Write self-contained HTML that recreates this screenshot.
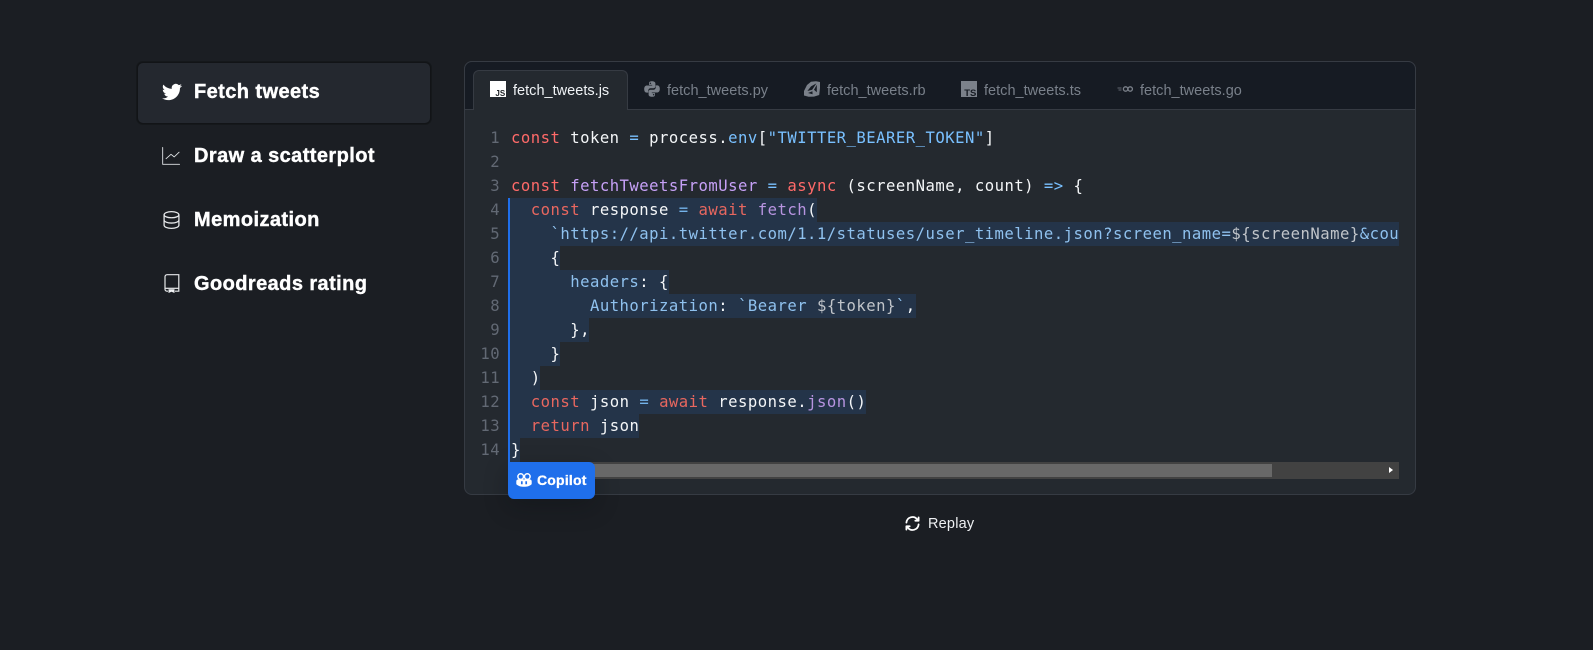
<!DOCTYPE html>
<html><head><meta charset="utf-8">
<style>
html,body{margin:0;padding:0;width:1593px;height:650px;overflow:hidden;background:#1b1e23;}
*{box-sizing:border-box}
body{position:relative;font-family:"Liberation Sans",sans-serif;}
.abs{position:absolute}
.nav{position:absolute;left:194px;font-weight:700;font-size:20px;letter-spacing:.42px;color:#fff;line-height:24px;white-space:nowrap;-webkit-text-stroke:.4px #fff}
.ic{position:absolute}
.active{position:absolute;left:137px;top:62px;width:294px;height:62px;background:#24282f;border:1px solid #121417;box-shadow:0 0 0 1px #15181b;border-radius:6px}
.panel{position:absolute;left:464px;top:61px;width:952px;height:434px;background:#24292f;border:1px solid #363b43;border-radius:8px;overflow:hidden}
.strip{position:absolute;left:464px;top:61px;width:952px;height:49px;background:#161b23;border:1px solid #363b43;border-radius:8px 8px 0 0}
.tab{position:absolute;left:473px;top:70px;width:155px;height:40px;background:#24292f;border:1px solid #363b43;border-bottom:0;border-radius:6px 6px 0 0}
.tt{position:absolute;top:81px;font-size:14.5px;line-height:20px;letter-spacing:.02px;color:#79808a;white-space:nowrap}
.row{position:absolute;left:510px;height:24px;background:#243449}
.n{position:absolute;left:470px;width:30px;text-align:right;font:15.6px/24px "DejaVu Sans Mono",monospace;color:#626974;letter-spacing:.4px}
.l{position:absolute;left:511px;width:888px;overflow:hidden;font:15.6px/24px "DejaVu Sans Mono",monospace;letter-spacing:.48px;color:#f4f6f8;white-space:pre}
.k{color:#ff6a69}.b{color:#79c0ff}.p{color:#c6a0f6}
.d .k{color:#e8675f}.d .b{color:#74b3ea}.d .p{color:#b794e0}.d .s{color:#8fc1ee}.d .g{color:#c0c4c9}
</style></head><body>

<div class="active"></div>
<svg class="ic" style="left:162px;top:82px" width="20" height="20" viewBox="0 0 24 24" fill="#fff"><path d="M23.95 4.57a10 10 0 0 1-2.82.77 4.96 4.96 0 0 0 2.16-2.72 9.9 9.9 0 0 1-3.12 1.18 4.92 4.92 0 0 0-8.38 4.48A13.98 13.98 0 0 1 1.64 3.16a4.92 4.92 0 0 0 1.52 6.57 4.9 4.9 0 0 1-2.23-.62v.06a4.92 4.92 0 0 0 3.95 4.83 5 5 0 0 1-2.21.08 4.94 4.94 0 0 0 4.6 3.42A9.87 9.87 0 0 1 0 19.54a14 14 0 0 0 7.56 2.21c9.05 0 14-7.5 14-13.98 0-.21 0-.42-.02-.63a9.94 9.94 0 0 0 2.46-2.55z"/></svg>
<div class="nav" style="top:80px">Fetch tweets</div>

<svg class="ic" style="left:162px;top:147px" width="18" height="18" viewBox="0 0 16 16" fill="none" stroke="#dfe2e5" stroke-width=".8"><path d="M.6.4v15h15" stroke-linecap="round" stroke-linejoin="round"/><path d="M15.200 4.600l-4.400 4.200-2.800-2.300-4.400 3.900" stroke-linecap="round" stroke-linejoin="round"/></svg>
<div class="nav" style="top:144px">Draw a scatterplot</div>

<svg class="ic" style="left:163px;top:211px" width="17" height="18" viewBox="0 0 16 17" fill="none" stroke="#e6e8ea" stroke-width="1.200"><ellipse cx="8" cy="3.500" rx="7" ry="2.900"/><path d="M1 3.500v10c0 1.600 3.100 2.900 7 2.900s7-1.300 7-2.900v-10M1 8.500c0 1.600 3.100 2.900 7 2.900s7-1.300 7-2.900"/></svg>
<div class="nav" style="top:208px">Memoization</div>

<svg class="ic" style="left:164px;top:274px" width="16" height="19" viewBox="0 0 16 19" fill="none" stroke="#e6e8ea" stroke-width="1.200"><path d="M4 17.200H3A2 2 0 0 1 1 15.200V2.700A2 2 0 0 1 3 .7h11.800v16.500H11"/><path d="M1 14.300h13.800"/><path d="M4.500 15.200h6V19L7.500 17.700 4.500 19z" fill="#f0f2f4" stroke="none"/></svg>
<div class="nav" style="top:272px">Goodreads rating</div>

<div class="panel"></div>
<div class="strip"></div>
<div class="tab"></div>

<!-- JS -->
<svg class="ic" style="left:490px;top:81px" width="16" height="16" viewBox="0 0 16 16"><rect width="16" height="16" fill="#fff"/><text x="15.200" y="15" text-anchor="end" font-family="Liberation Sans" font-weight="700" font-size="8" fill="#1b1f23">JS</text></svg>
<div class="tt" style="left:513px;color:#f0f3f6">fetch_tweets.js</div>

<!-- Python -->
<svg class="ic" style="left:644px;top:81px" width="16" height="16" viewBox="0 0 16 16" fill="#7b818a"><path d="M8 .2C5.200.2 5 1.400 5 2.400v1.500h3.200v.6H3C1.400 4.500.2 5.600.2 8s1 3.600 2.500 3.600h1.600V9.500c0-1.300 1.100-2.300 2.300-2.300h3c1.100 0 1.800-.9 1.800-1.900V2.400C11.400 1 10 .2 8 .2z"/><path d="M8 15.800c2.800 0 3-1.200 3-2.200v-1.500H7.800v-.6H13c1.600 0 2.800-1.100 2.800-3.500s-1-3.600-2.500-3.600h-1.600v2.100c0 1.300-1.100 2.300-2.300 2.300h-3c-1.100 0-1.800.9-1.800 1.900v2.900C4.600 15 6 15.800 8 15.800z"/><circle cx="6.400" cy="2.300" r=".7" fill="#161b23"/><circle cx="9.600" cy="13.700" r=".7" fill="#161b23"/></svg>
<div class="tt" style="left:667px">fetch_tweets.py</div>

<!-- Ruby -->
<svg class="ic" style="left:804px;top:81px" width="16" height="16" viewBox="0 0 16 16"><path d="M7 .8L12 .2 16 1v6l-.8 7-5.200 1.600-5.400.2L0 14.500 0 10 3 4z" fill="#7b818a"/><path d="M12.400 2.400L7 5.400 3.400 10l4.800-1.200zM8.400 10.200l-4.400 1.800 4.600 1.200zM12.800 3.800l-2.800 5 2.800 2.400z" fill="#161b23"/></svg>
<div class="tt" style="left:827px">fetch_tweets.rb</div>

<!-- TS -->
<svg class="ic" style="left:961px;top:81px" width="16" height="16" viewBox="0 0 16 16"><rect width="16" height="16" fill="#7b818a"/><text x="15.400" y="14.800" text-anchor="end" font-family="Liberation Sans" font-weight="700" font-size="9.500" fill="#161b23">TS</text></svg>
<div class="tt" style="left:984px">fetch_tweets.ts</div>

<!-- Go -->
<svg class="ic" style="left:1117px;top:81px" width="16" height="16" viewBox="0 0 16 16" fill="none" stroke="#7b818a" stroke-width="1.300"><circle cx="8.600" cy="8" r="2.200"/><circle cx="13.200" cy="8" r="2.200"/><path d="M.5 7h4M1.500 9h3" stroke-width=".8"/></svg>
<div class="tt" style="left:1140px">fetch_tweets.go</div>

<!-- badge shadow, below code and scrollbar -->
<div class="abs" style="left:508px;top:462px;width:87px;height:37px;border-radius:0 6px 6px 6px;box-shadow:0 8px 24px rgba(10,12,16,.3)"></div>

<!-- highlight rows -->
<div class="row" style="top:198px;width:307px"></div>
<div class="row" style="top:222px;width:889px"></div>
<div class="row" style="top:246px;width:50px"></div>
<div class="row" style="top:270px;width:159px"></div>
<div class="row" style="top:294px;width:406px"></div>
<div class="row" style="top:318px;width:79px"></div>
<div class="row" style="top:342px;width:50px"></div>
<div class="row" style="top:366px;width:30px"></div>
<div class="row" style="top:390px;width:356px"></div>
<div class="row" style="top:414px;width:129px"></div>
<div class="row" style="top:438px;width:10px"></div>
<div class="abs" style="left:508px;top:198px;width:2px;height:266px;background:#1f6feb"></div>

<div class="n" style="top:126px">1</div>
<div class="n" style="top:150px">2</div>
<div class="n" style="top:174px">3</div>
<div class="n" style="top:198px">4</div>
<div class="n" style="top:222px">5</div>
<div class="n" style="top:246px">6</div>
<div class="n" style="top:270px">7</div>
<div class="n" style="top:294px">8</div>
<div class="n" style="top:318px">9</div>
<div class="n" style="top:342px">10</div>
<div class="n" style="top:366px">11</div>
<div class="n" style="top:390px">12</div>
<div class="n" style="top:414px">13</div>
<div class="n" style="top:438px">14</div>

<div class="l" style="top:126px"><span class="k">const</span> token <span class="b">=</span> process.<span class="b">env</span>[<span class="b">"TWITTER_BEARER_TOKEN"</span>]</div>
<div class="l" style="top:174px"><span class="k">const</span> <span class="p">fetchTweetsFromUser</span> <span class="b">=</span> <span class="k">async</span> (screenName, count) <span class="b">=&gt;</span> {</div>
<div class="l d" style="top:198px">  <span class="k">const</span> response <span class="b">=</span> <span class="k">await</span> <span class="p">fetch</span>(</div>
<div class="l d" style="top:222px">    <span class="s">`https://api.twitter.com/1.1/statuses/user_timeline.json?screen_name=</span><span class="g">${screenName}</span><span class="s">&amp;count=${count}`</span>,</div>
<div class="l d" style="top:246px">    {</div>
<div class="l d" style="top:270px">      <span class="s">headers</span>: {</div>
<div class="l d" style="top:294px">        <span class="s">Authorization</span>: <span class="s">`Bearer </span><span class="g">${token}</span><span class="s">`</span>,</div>
<div class="l d" style="top:318px">      },</div>
<div class="l d" style="top:342px">    }</div>
<div class="l d" style="top:366px">  )</div>
<div class="l d" style="top:390px">  <span class="k">const</span> json <span class="b">=</span> <span class="k">await</span> response.<span class="p">json</span>()</div>
<div class="l d" style="top:414px">  <span class="k">return</span> json</div>
<div class="l d" style="top:438px">}</div>

<!-- scrollbar -->
<div class="abs" style="left:510px;top:462px;width:889px;height:17px;background:#424242"></div>
<div class="abs" style="left:560px;top:464px;width:712px;height:13px;background:#686868"></div>
<div class="abs" style="left:1389px;top:467px;width:0;height:0;border-left:4px solid #fff;border-top:3.500px solid transparent;border-bottom:3.500px solid transparent"></div>

<!-- copilot badge -->
<div class="abs" style="left:508px;top:462px;width:87px;height:37px;background:#1f6feb;border-radius:0 6px 6px 6px"></div>
<svg class="ic" style="left:516px;top:473px" width="16" height="14" viewBox="0 0 16 14"><circle cx="4.700" cy="3.600" r="2.800" fill="none" stroke="#fff" stroke-width="1.500"/><circle cx="11.300" cy="3.600" r="2.800" fill="none" stroke="#fff" stroke-width="1.500"/><path d="M2.500 6.400h11c1.300 0 2.200.8 2.200 1.900v2.300c0 .5-.2.800-.6 1.100C13.700 12.800 11.300 13.800 8 13.800S2.300 12.800.9 11.700C.5 11.400.3 11.100.3 10.600V8.300c0-1.100.9-1.900 2.200-1.900z" fill="#fff"/><path d="M5.800 8.200v3M10.200 8.200v3" stroke="#1f6feb" stroke-width="1.700"/></svg>
<div class="abs" style="left:537px;top:471px;font-size:14px;line-height:18px;font-weight:700;color:#fff;white-space:nowrap;letter-spacing:.2px;-webkit-text-stroke:.3px #fff">Copilot</div>

<!-- replay -->
<svg class="ic" style="left:905px;top:516px" width="15" height="15" viewBox="0 0 16 16" fill="none" stroke="#fff" stroke-width="1.900" stroke-linecap="round" stroke-linejoin="round"><path d="M1.500 7A6.500 6.500 0 0 1 13 3.500L14.500 5M14.500 1.500V5H11"/><path d="M14.500 9A6.500 6.500 0 0 1 3 12.500L1.500 11M1.500 14.500V11H5"/></svg>
<div class="abs" style="left:928px;top:515px;font-size:14.500px;line-height:18px;color:#eef0f2;white-space:nowrap;letter-spacing:.2px">Replay</div>

</body></html>
